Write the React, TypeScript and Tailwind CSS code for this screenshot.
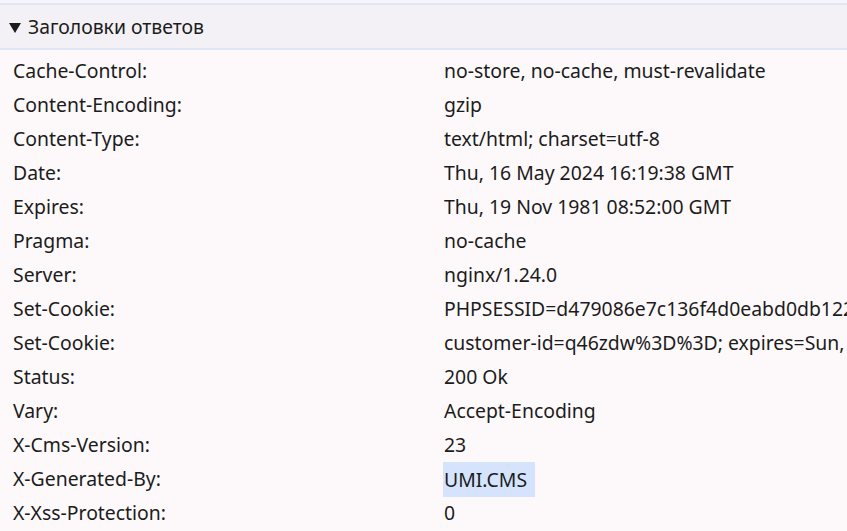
import React from "react";

const rows: [string, string, boolean?][] = [
  ["Cache-Control:", "no-store, no-cache, must-revalidate"],
  ["Content-Encoding:", "gzip"],
  ["Content-Type:", "text/html; charset=utf-8"],
  ["Date:", "Thu, 16 May 2024 16:19:38 GMT"],
  ["Expires:", "Thu, 19 Nov 1981 08:52:00 GMT"],
  ["Pragma:", "no-cache"],
  ["Server:", "nginx/1.24.0"],
  ["Set-Cookie:", "PHPSESSID=d479086e7c136f4d0eabd0db1224a6c5; path=/"],
  ["Set-Cookie:", "customer-id=q46zdw%3D%3D; expires=Sun, 16-Jun-2024 16:19:38 GMT"],
  ["Status:", "200 Ok"],
  ["Vary:", "Accept-Encoding"],
  ["X-Cms-Version:", "23"],
  ["X-Generated-By:", "UMI.CMS", true],
  ["X-Xss-Protection:", "0"],
];

export default function App() {
  return (
    <div
      className="w-[847px] h-[531px] overflow-hidden bg-[#fdf9fb] text-[#1c1c1c]"
      style={{ fontFamily: '"Noto Sans", "Open Sans", sans-serif' }}
    >
      <div className="h-[3px] bg-[#f7f5f9]" />
      <div className="h-[47px] bg-[#f3f1f5] border-y-2 border-[#dfe6f8] flex items-center pl-[9px] text-[19.4px] whitespace-nowrap">
        <svg width="12" height="10" viewBox="0 0 12 10" className="mr-[7px] mt-[2px]">
          <path d="M0 0 H12 L6 10 Z" fill="#1c1c1c" />
        </svg>
        <span>Заголовки ответов</span>
      </div>
      <div className="pt-[4px]">
        {rows.map(([k, v, hl], i) => (
          <div key={i} className="h-[34px] flex items-center text-[19.4px] whitespace-nowrap">
            <div className="w-[444px] shrink-0 pl-[13px]">{k}</div>
            <div className="shrink-0">
              <span className={hl ? "bg-[#d5e3fc] inline-block leading-[35px] -ml-px pl-px pr-[8px]" : ""}>{v}</span>
            </div>
          </div>
        ))}
      </div>
    </div>
  );
}
